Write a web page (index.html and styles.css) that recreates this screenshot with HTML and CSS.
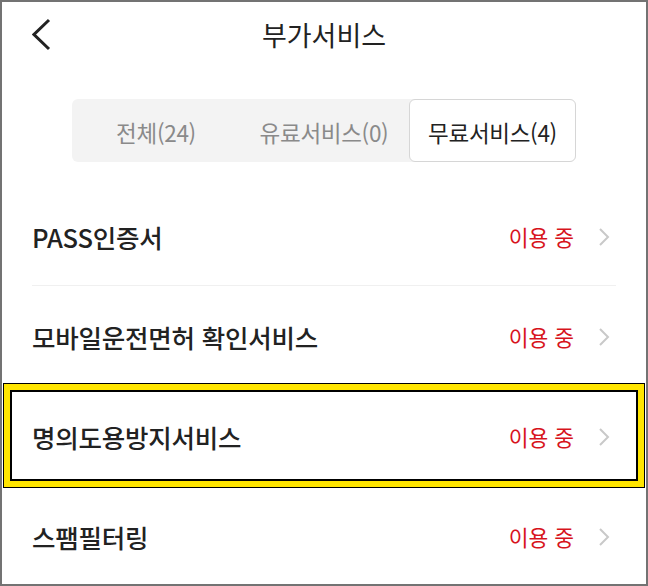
FILE: index.html
```html
<!DOCTYPE html>
<html lang="ko">
<head>
<meta charset="utf-8">
<title>부가서비스</title>
<link rel="stylesheet" href="styles.css">
</head>
<body>
<div class="page">
  <header class="header">
    <svg class="back" width="22" height="34" viewBox="0 0 22 34"><path d="M17 2 L2 16.5 L17 31" fill="none" stroke="#222" stroke-width="3"/></svg>
    <h1 class="title">부가서비스</h1>
  </header>
  <nav class="tabs">
    <div class="tab">전체(24)</div>
    <div class="tab">유료서비스(0)</div>
    <div class="tab active">무료서비스(4)</div>
  </nav>
  <ul class="list">
    <li class="row"><span class="name">PASS인증서</span><span class="status">이용 중</span><svg class="chev" width="12" height="18" viewBox="0 0 12 18"><path d="M2 1 L10 9 L2 17" fill="none" stroke="#c9c9c9" stroke-width="2"/></svg></li>
    <li class="row"><span class="name">모바일운전면허 확인서비스</span><span class="status">이용 중</span><svg class="chev" width="12" height="18" viewBox="0 0 12 18"><path d="M2 1 L10 9 L2 17" fill="none" stroke="#c9c9c9" stroke-width="2"/></svg></li>
    <li class="row"><span class="name">명의도용방지서비스</span><span class="status">이용 중</span><svg class="chev" width="12" height="18" viewBox="0 0 12 18"><path d="M2 1 L10 9 L2 17" fill="none" stroke="#c9c9c9" stroke-width="2"/></svg></li>
    <li class="row"><span class="name">스팸필터링</span><span class="status">이용 중</span><svg class="chev" width="12" height="18" viewBox="0 0 12 18"><path d="M2 1 L10 9 L2 17" fill="none" stroke="#c9c9c9" stroke-width="2"/></svg></li>
  </ul>
  <div class="highlight"></div>
</div>
</body>
</html>
```
FILE: styles.css
```css
* { box-sizing: border-box; }
html, body { margin: 0; padding: 0; background: #fff; }
body { font-family: "Noto Sans CJK KR", "Noto Sans", sans-serif; color: #222; }
.page {
  position: relative;
  width: 648px;
  height: 586px;
  border: 2px solid #737373;
  overflow: hidden;
  background: #fff;
}
.header {
  height: 68px;
  display: flex;
  align-items: center;
  justify-content: center;
  position: relative;
}
.back { position: absolute; left: 30px; top: 16px; }
.title {
  margin: 0;
  font-size: 27px;
  font-weight: 400;
  color: #222;
  line-height: 1;
  margin-top: -3px;
}
.tabs {
  width: 504px;
  height: 63px;
  margin: 29px auto 0;
  background: #f3f3f3;
  border-radius: 6px;
  display: grid;
  grid-template-columns: 1fr 1fr 1fr;
}
.tab {
  display: flex;
  align-items: center;
  justify-content: center;
  font-size: 22.5px;
  color: #8a8a8a;
  padding-top: 2px;
  letter-spacing: -0.3px;
}
.tab.active {
  background: #fff;
  color: #222;
  border: 1px solid #d6d6d6;
  border-radius: 6px;
  margin: 0 0 0 1px;
}
.list {
  list-style: none;
  margin: 24px 30px 0;
  padding: 0;
}
.row {
  height: 100px;
  display: flex;
  align-items: center;
  border-bottom: 1px solid #f0f0f0;
  padding-top: 2px;
}
.name {
  flex: 1;
  font-size: 25.5px;
  font-weight: 500;
  color: #222;
  letter-spacing: -0.2px;
}
.status {
  font-size: 21.5px;
  color: #d7141c;
}
.chev { margin-left: 24px; margin-right: 6px; }
.highlight {
  position: absolute;
  left: 1px;
  top: 381px;
  width: 642px;
  height: 105px;
  border: 1px solid #000;
  box-shadow: inset 0 0 0 6px #ffe500, inset 0 0 0 8px #000;
}
```
